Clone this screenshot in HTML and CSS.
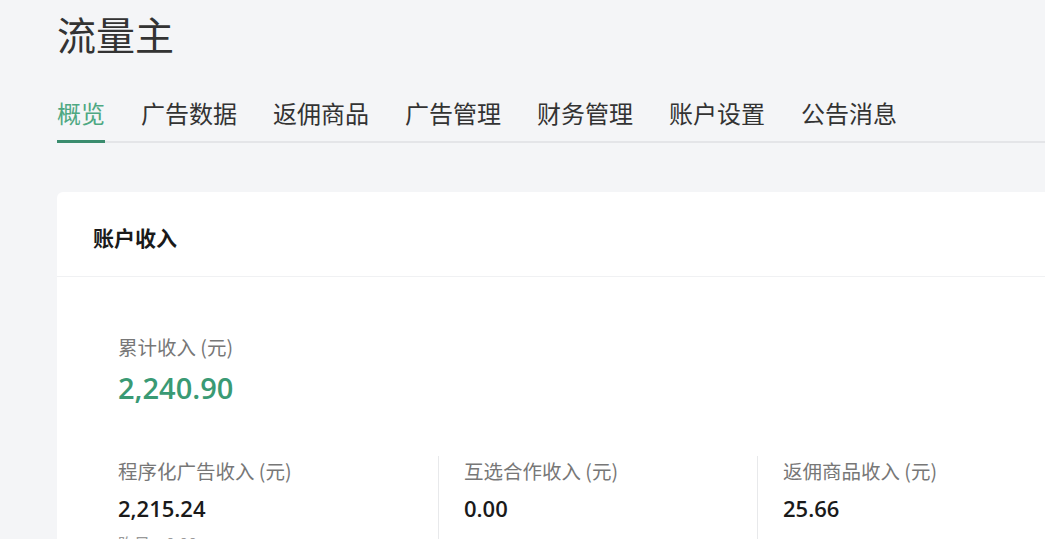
FILE: index.html
```html
<!DOCTYPE html>
<html lang="zh-CN">
<head>
<meta charset="utf-8">
<title>流量主</title>
<link rel="stylesheet" href="styles.css">
</head>
<body>
<div class="page">
  <h1 class="title">流量主</h1>
  <nav class="tabs">
    <span class="tab active">概览</span>
    <span class="tab">广告数据</span>
    <span class="tab">返佣商品</span>
    <span class="tab">广告管理</span>
    <span class="tab">财务管理</span>
    <span class="tab">账户设置</span>
    <span class="tab">公告消息</span>
  </nav>
  <section class="card">
    <div class="card-head">账户收入</div>
    <div class="card-body">
      <div class="total">
        <div class="label">累计收入 (元)</div>
        <div class="total-value">2,240.90</div>
      </div>
      <div class="stats">
        <div class="stat">
          <div class="label">程序化广告收入 (元)</div>
          <div class="value">2,215.24</div>
          <div class="sub">昨日：0.00</div>
        </div>
        <div class="stat">
          <div class="label">互选合作收入 (元)</div>
          <div class="value">0.00</div>
        </div>
        <div class="stat">
          <div class="label">返佣商品收入 (元)</div>
          <div class="value">25.66</div>
        </div>
      </div>
    </div>
  </section>
</div>
</body>
</html>
```

FILE: styles.css
```css
html, body {
  margin: 0;
  padding: 0;
  background: #f4f5f7;
  overflow: hidden;
  font-family: "Noto Sans CJK SC", "Noto Sans", sans-serif;
}
.page {
  padding-left: 57px;
  width: 1200px;
}
.title {
  margin: 8px 0 0;
  font-size: 39px;
  line-height: 50px;
  font-weight: 400;
  color: #333;
}
.tabs {
  margin-top: 39px;
  display: flex;
  gap: 36px;
  border-bottom: 2px solid #e4e5e8;
}
.tab {
  font-size: 24px;
  line-height: 32px;
  color: #333;
  padding-bottom: 11px;
  border-bottom: 3px solid transparent;
  margin-bottom: -2px;
}
.tab.active {
  color: #4ea882;
  border-bottom-color: #3a8c6e;
}
.card {
  margin-top: 49px;
  background: #fff;
  border-radius: 6px;
  width: 1100px;
}
.card-head {
  padding: 30px 36px 24px;
  font-size: 21px;
  line-height: 30px;
  font-weight: 700;
  color: #1a1a1a;
  border-bottom: 1px solid #f0f1f3;
}
.card-body {
  padding: 58px 0 0 61px;
}
.label {
  font-size: 19.5px;
  line-height: 24px;
  color: #777;
}
.total-value {
  margin-top: 11px;
  font-family: "Open Sans", "Noto Sans", sans-serif;
  font-size: 29px;
  line-height: 36px;
  font-weight: 600;
  color: #3a9a74;
}
.stats {
  margin-top: 50px;
  display: grid;
  grid-template-columns: 320px 319px 320px;
}
.stat {
  padding: 3px 0 0 25px;
  border-left: 1px solid #e8e9eb;
}
.stat:first-child {
  padding-left: 0;
  border-left: none;
}
.value {
  margin-top: 10px;
  font-family: "Open Sans", "Noto Sans", sans-serif;
  font-size: 22px;
  line-height: 30px;
  font-weight: 600;
  color: #1a1a1a;
}
.sub {
  margin-top: 9px;
  font-size: 16px;
  line-height: 22px;
  color: #999;
}
```
